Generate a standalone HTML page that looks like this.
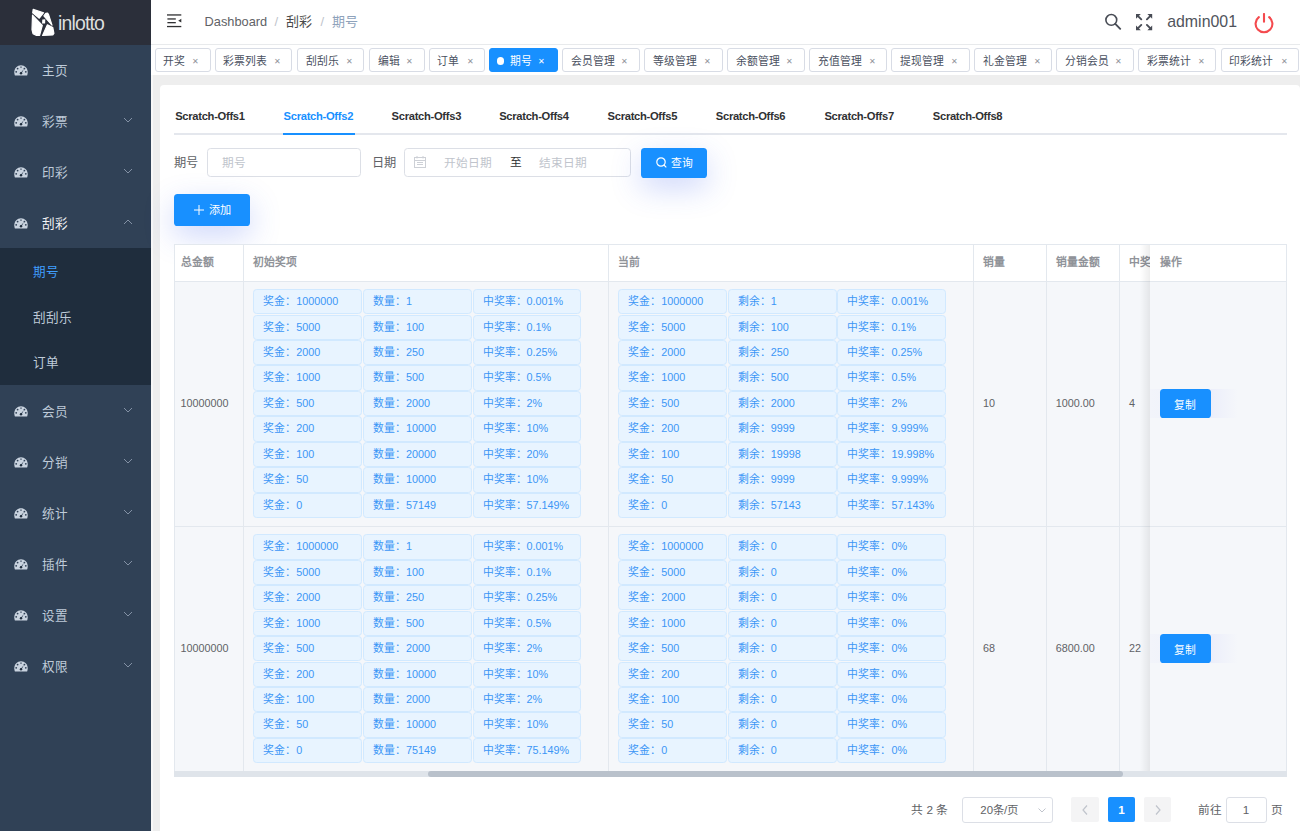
<!DOCTYPE html><html lang="zh-CN"><head><meta charset="utf-8"><style>
*{box-sizing:border-box;margin:0;padding:0}
svg{display:block}
html,body{width:1300px;height:831px;overflow:hidden;background:#eeeeee;font-family:"Liberation Sans",sans-serif;}
.abs{position:absolute}
.sb{position:absolute;left:0;top:0;width:151px;height:831px;background:#304156}
.logo{position:absolute;left:0;top:0;width:151px;height:44.5px;background:#2b2f3a}
.mi{position:absolute;left:0;width:151px;color:#bfcbd9;font-size:12.6px;}
.mi .ic{position:absolute;left:14px;}
.mi .tx{position:absolute;left:42px;}
.mi .ar{position:absolute;left:123px;}
.sub{position:absolute;left:0;width:151px;background:#1f2d3d}
.hdr{position:absolute;left:151px;top:0;width:1149px;height:45px;background:#fff;}
.tags{position:absolute;left:151px;top:45px;width:1149px;height:29.7px;background:#fff}
.tg{position:absolute;top:3px;height:23.6px;border:1px solid #d8dce5;border-radius:3px;background:#fff;color:#495060;font-size:10.8px;line-height:21.6px;white-space:nowrap}
.tg .t{position:absolute;top:2px}
.tg .x{position:absolute;top:2px;font-size:8px;color:#909399}
.card{position:absolute;left:160px;top:84.6px;width:1139.5px;height:800px;background:#fff;border-radius:4px}
.tab{position:absolute;top:109.6px;font-size:11.2px;font-weight:bold;color:#303133;white-space:nowrap;letter-spacing:-0.3px}
.lbl{position:absolute;font-size:12.2px;color:#606266}
.inp{position:absolute;border:1px solid #dcdfe6;border-radius:3.6px;background:#fff}
.ph{position:absolute;font-size:11.7px;color:#c0c4cc;white-space:nowrap}
.btn{position:absolute;background:#1890ff;border-radius:3.6px;color:#fff;font-size:11.7px;white-space:nowrap}
.tbl{position:absolute;left:174px;top:244px;width:1113px;height:533px;border:1px solid #ebeef5;background:#f5f7fa;overflow:hidden}
.th{position:absolute;font-size:10.8px;font-weight:bold;color:#909399;white-space:nowrap}
.td{position:absolute;font-size:10.8px;color:#606266;white-space:nowrap}
.vl{position:absolute;width:1px;background:#ebeef5}
.hl{position:absolute;height:1px;background:#ebeef5}
.et{position:absolute;width:108.8px;height:25.3px;background:#e8f4ff;border:1px solid #d1e9ff;border-radius:3.6px;color:#3b96f6;font-size:10.8px;line-height:23px;padding-left:9px;white-space:nowrap}
</style></head><body>
<div class="sb">
<div class="logo">
<svg class="abs" style="left:30px;top:6px" width="26" height="32" viewBox="0 0 26 32"><g fill="#fff" stroke="#fff" stroke-width="1.2" stroke-linejoin="round"><path d="M3.2 3.4L13.6 6.7 9.3 12.2 2.7 6.9z"/><path d="M2.5 9.2L12.3 19.4 9.6 29.3 6.5 29.5 3 27.6 2 23.5z"/><path d="M13.9 9.9L15.8 7.3 17.6 7.2 18.6 8.6 22 19.2z"/><path d="M17.4 18.8L22.8 21.6 23.9 27.4 22.8 29 12.6 29.4z"/></g><path d="M12.3 13.4L15.3 13.3 15.1 17.4 12.0 17.5z" fill="#fff"/></svg>
<div class="abs" style="left:57.8px;top:11px;font-size:20.5px;color:#dedede;letter-spacing:-0.9px;transform:scaleX(.95);transform-origin:left">inlotto</div>
</div>
<div class="mi" style="top:44.00px;height:51.05px">
<div class="ic" style="top:20.92px"><svg width="14" height="11" viewBox="0 0 14 11"><path d="M7 0.3C3.2 0.3 0.3 3.3 0.3 7.2c0 1.2 0.2 2.3 0.6 3.3h12.2c0.4-1 0.6-2.1 0.6-3.3C13.7 3.3 10.8 0.3 7 0.3z" fill="#c9d3df"/><circle cx="3.6" cy="3.6" r="0.9" fill="#304156"/><circle cx="10.4" cy="3.6" r="0.9" fill="#304156"/><circle cx="2.2" cy="6.8" r="0.9" fill="#304156"/><circle cx="11.8" cy="6.8" r="0.9" fill="#304156"/><rect x="6.5" y="1.4" width="1" height="1.6" fill="#304156"/><path d="M6.4 8.3L9.9 3.9 7.6 8.6z" fill="#304156"/><circle cx="7" cy="8.2" r="1.2" fill="#1f2d3d"/></svg></div>
<div class="tx" style="top:18.92px;line-height:16px;">主页</div>
</div>
<div class="mi" style="top:95.05px;height:51.05px">
<div class="ic" style="top:20.92px"><svg width="14" height="11" viewBox="0 0 14 11"><path d="M7 0.3C3.2 0.3 0.3 3.3 0.3 7.2c0 1.2 0.2 2.3 0.6 3.3h12.2c0.4-1 0.6-2.1 0.6-3.3C13.7 3.3 10.8 0.3 7 0.3z" fill="#c9d3df"/><circle cx="3.6" cy="3.6" r="0.9" fill="#304156"/><circle cx="10.4" cy="3.6" r="0.9" fill="#304156"/><circle cx="2.2" cy="6.8" r="0.9" fill="#304156"/><circle cx="11.8" cy="6.8" r="0.9" fill="#304156"/><rect x="6.5" y="1.4" width="1" height="1.6" fill="#304156"/><path d="M6.4 8.3L9.9 3.9 7.6 8.6z" fill="#304156"/><circle cx="7" cy="8.2" r="1.2" fill="#1f2d3d"/></svg></div>
<div class="tx" style="top:18.92px;line-height:16px;">彩票</div>
<div class="ar" style="top:22.02px"><svg width="10" height="6" viewBox="0 0 10 6"><path d="M1 1L5 5 9 1" fill="none" stroke="#8391a5" stroke-width="1"/></svg></div>
</div>
<div class="mi" style="top:146.10px;height:51.05px">
<div class="ic" style="top:20.92px"><svg width="14" height="11" viewBox="0 0 14 11"><path d="M7 0.3C3.2 0.3 0.3 3.3 0.3 7.2c0 1.2 0.2 2.3 0.6 3.3h12.2c0.4-1 0.6-2.1 0.6-3.3C13.7 3.3 10.8 0.3 7 0.3z" fill="#c9d3df"/><circle cx="3.6" cy="3.6" r="0.9" fill="#304156"/><circle cx="10.4" cy="3.6" r="0.9" fill="#304156"/><circle cx="2.2" cy="6.8" r="0.9" fill="#304156"/><circle cx="11.8" cy="6.8" r="0.9" fill="#304156"/><rect x="6.5" y="1.4" width="1" height="1.6" fill="#304156"/><path d="M6.4 8.3L9.9 3.9 7.6 8.6z" fill="#304156"/><circle cx="7" cy="8.2" r="1.2" fill="#1f2d3d"/></svg></div>
<div class="tx" style="top:18.92px;line-height:16px;">印彩</div>
<div class="ar" style="top:22.02px"><svg width="10" height="6" viewBox="0 0 10 6"><path d="M1 1L5 5 9 1" fill="none" stroke="#8391a5" stroke-width="1"/></svg></div>
</div>
<div class="mi" style="top:197.15px;height:51.05px">
<div class="ic" style="top:20.92px"><svg width="14" height="11" viewBox="0 0 14 11"><path d="M7 0.3C3.2 0.3 0.3 3.3 0.3 7.2c0 1.2 0.2 2.3 0.6 3.3h12.2c0.4-1 0.6-2.1 0.6-3.3C13.7 3.3 10.8 0.3 7 0.3z" fill="#c9d3df"/><circle cx="3.6" cy="3.6" r="0.9" fill="#304156"/><circle cx="10.4" cy="3.6" r="0.9" fill="#304156"/><circle cx="2.2" cy="6.8" r="0.9" fill="#304156"/><circle cx="11.8" cy="6.8" r="0.9" fill="#304156"/><rect x="6.5" y="1.4" width="1" height="1.6" fill="#304156"/><path d="M6.4 8.3L9.9 3.9 7.6 8.6z" fill="#304156"/><circle cx="7" cy="8.2" r="1.2" fill="#1f2d3d"/></svg></div>
<div class="tx" style="top:18.92px;line-height:16px;color:#f4f4f5">刮彩</div>
<div class="ar" style="top:22.02px"><svg width="10" height="6" viewBox="0 0 10 6"><path d="M1 5L5 1 9 5" fill="none" stroke="#8391a5" stroke-width="1"/></svg></div>
</div>
<div class="sub" style="top:248.20px;height:136.65px">
<div class="abs" style="left:32.5px;top:16.17px;line-height:16px;font-size:12.6px;color:#409eff">期号</div>
<div class="abs" style="left:32.5px;top:61.72px;line-height:16px;font-size:12.6px;color:#bfcbd9">刮刮乐</div>
<div class="abs" style="left:32.5px;top:107.28px;line-height:16px;font-size:12.6px;color:#bfcbd9">订单</div>
</div>
<div class="mi" style="top:384.85px;height:51.05px">
<div class="ic" style="top:20.92px"><svg width="14" height="11" viewBox="0 0 14 11"><path d="M7 0.3C3.2 0.3 0.3 3.3 0.3 7.2c0 1.2 0.2 2.3 0.6 3.3h12.2c0.4-1 0.6-2.1 0.6-3.3C13.7 3.3 10.8 0.3 7 0.3z" fill="#c9d3df"/><circle cx="3.6" cy="3.6" r="0.9" fill="#304156"/><circle cx="10.4" cy="3.6" r="0.9" fill="#304156"/><circle cx="2.2" cy="6.8" r="0.9" fill="#304156"/><circle cx="11.8" cy="6.8" r="0.9" fill="#304156"/><rect x="6.5" y="1.4" width="1" height="1.6" fill="#304156"/><path d="M6.4 8.3L9.9 3.9 7.6 8.6z" fill="#304156"/><circle cx="7" cy="8.2" r="1.2" fill="#1f2d3d"/></svg></div>
<div class="tx" style="top:18.92px;line-height:16px">会员</div>
<div class="ar" style="top:22.02px"><svg width="10" height="6" viewBox="0 0 10 6"><path d="M1 1L5 5 9 1" fill="none" stroke="#8391a5" stroke-width="1"/></svg></div>
</div>
<div class="mi" style="top:435.90px;height:51.05px">
<div class="ic" style="top:20.92px"><svg width="14" height="11" viewBox="0 0 14 11"><path d="M7 0.3C3.2 0.3 0.3 3.3 0.3 7.2c0 1.2 0.2 2.3 0.6 3.3h12.2c0.4-1 0.6-2.1 0.6-3.3C13.7 3.3 10.8 0.3 7 0.3z" fill="#c9d3df"/><circle cx="3.6" cy="3.6" r="0.9" fill="#304156"/><circle cx="10.4" cy="3.6" r="0.9" fill="#304156"/><circle cx="2.2" cy="6.8" r="0.9" fill="#304156"/><circle cx="11.8" cy="6.8" r="0.9" fill="#304156"/><rect x="6.5" y="1.4" width="1" height="1.6" fill="#304156"/><path d="M6.4 8.3L9.9 3.9 7.6 8.6z" fill="#304156"/><circle cx="7" cy="8.2" r="1.2" fill="#1f2d3d"/></svg></div>
<div class="tx" style="top:18.92px;line-height:16px">分销</div>
<div class="ar" style="top:22.02px"><svg width="10" height="6" viewBox="0 0 10 6"><path d="M1 1L5 5 9 1" fill="none" stroke="#8391a5" stroke-width="1"/></svg></div>
</div>
<div class="mi" style="top:486.95px;height:51.05px">
<div class="ic" style="top:20.92px"><svg width="14" height="11" viewBox="0 0 14 11"><path d="M7 0.3C3.2 0.3 0.3 3.3 0.3 7.2c0 1.2 0.2 2.3 0.6 3.3h12.2c0.4-1 0.6-2.1 0.6-3.3C13.7 3.3 10.8 0.3 7 0.3z" fill="#c9d3df"/><circle cx="3.6" cy="3.6" r="0.9" fill="#304156"/><circle cx="10.4" cy="3.6" r="0.9" fill="#304156"/><circle cx="2.2" cy="6.8" r="0.9" fill="#304156"/><circle cx="11.8" cy="6.8" r="0.9" fill="#304156"/><rect x="6.5" y="1.4" width="1" height="1.6" fill="#304156"/><path d="M6.4 8.3L9.9 3.9 7.6 8.6z" fill="#304156"/><circle cx="7" cy="8.2" r="1.2" fill="#1f2d3d"/></svg></div>
<div class="tx" style="top:18.92px;line-height:16px">统计</div>
<div class="ar" style="top:22.02px"><svg width="10" height="6" viewBox="0 0 10 6"><path d="M1 1L5 5 9 1" fill="none" stroke="#8391a5" stroke-width="1"/></svg></div>
</div>
<div class="mi" style="top:538.00px;height:51.05px">
<div class="ic" style="top:20.92px"><svg width="14" height="11" viewBox="0 0 14 11"><path d="M7 0.3C3.2 0.3 0.3 3.3 0.3 7.2c0 1.2 0.2 2.3 0.6 3.3h12.2c0.4-1 0.6-2.1 0.6-3.3C13.7 3.3 10.8 0.3 7 0.3z" fill="#c9d3df"/><circle cx="3.6" cy="3.6" r="0.9" fill="#304156"/><circle cx="10.4" cy="3.6" r="0.9" fill="#304156"/><circle cx="2.2" cy="6.8" r="0.9" fill="#304156"/><circle cx="11.8" cy="6.8" r="0.9" fill="#304156"/><rect x="6.5" y="1.4" width="1" height="1.6" fill="#304156"/><path d="M6.4 8.3L9.9 3.9 7.6 8.6z" fill="#304156"/><circle cx="7" cy="8.2" r="1.2" fill="#1f2d3d"/></svg></div>
<div class="tx" style="top:18.92px;line-height:16px">插件</div>
<div class="ar" style="top:22.02px"><svg width="10" height="6" viewBox="0 0 10 6"><path d="M1 1L5 5 9 1" fill="none" stroke="#8391a5" stroke-width="1"/></svg></div>
</div>
<div class="mi" style="top:589.05px;height:51.05px">
<div class="ic" style="top:20.92px"><svg width="14" height="11" viewBox="0 0 14 11"><path d="M7 0.3C3.2 0.3 0.3 3.3 0.3 7.2c0 1.2 0.2 2.3 0.6 3.3h12.2c0.4-1 0.6-2.1 0.6-3.3C13.7 3.3 10.8 0.3 7 0.3z" fill="#c9d3df"/><circle cx="3.6" cy="3.6" r="0.9" fill="#304156"/><circle cx="10.4" cy="3.6" r="0.9" fill="#304156"/><circle cx="2.2" cy="6.8" r="0.9" fill="#304156"/><circle cx="11.8" cy="6.8" r="0.9" fill="#304156"/><rect x="6.5" y="1.4" width="1" height="1.6" fill="#304156"/><path d="M6.4 8.3L9.9 3.9 7.6 8.6z" fill="#304156"/><circle cx="7" cy="8.2" r="1.2" fill="#1f2d3d"/></svg></div>
<div class="tx" style="top:18.92px;line-height:16px">设置</div>
<div class="ar" style="top:22.02px"><svg width="10" height="6" viewBox="0 0 10 6"><path d="M1 1L5 5 9 1" fill="none" stroke="#8391a5" stroke-width="1"/></svg></div>
</div>
<div class="mi" style="top:640.10px;height:51.05px">
<div class="ic" style="top:20.92px"><svg width="14" height="11" viewBox="0 0 14 11"><path d="M7 0.3C3.2 0.3 0.3 3.3 0.3 7.2c0 1.2 0.2 2.3 0.6 3.3h12.2c0.4-1 0.6-2.1 0.6-3.3C13.7 3.3 10.8 0.3 7 0.3z" fill="#c9d3df"/><circle cx="3.6" cy="3.6" r="0.9" fill="#304156"/><circle cx="10.4" cy="3.6" r="0.9" fill="#304156"/><circle cx="2.2" cy="6.8" r="0.9" fill="#304156"/><circle cx="11.8" cy="6.8" r="0.9" fill="#304156"/><rect x="6.5" y="1.4" width="1" height="1.6" fill="#304156"/><path d="M6.4 8.3L9.9 3.9 7.6 8.6z" fill="#304156"/><circle cx="7" cy="8.2" r="1.2" fill="#1f2d3d"/></svg></div>
<div class="tx" style="top:18.92px;line-height:16px">权限</div>
<div class="ar" style="top:22.02px"><svg width="10" height="6" viewBox="0 0 10 6"><path d="M1 1L5 5 9 1" fill="none" stroke="#8391a5" stroke-width="1"/></svg></div>
</div>
</div>
<div class="abs" style="left:151px;top:45px;width:2px;height:786px;background:#f7f7f7"></div>
<div class="hdr">
<svg class="abs" style="left:16px;top:14px" width="15" height="14" viewBox="0 0 15 14"><g fill="#303133"><rect x="0" y="0.3" width="14.3" height="1.3"/><rect x="0.4" y="4.3" width="8.4" height="1.3"/><rect x="0.4" y="8" width="8.4" height="1.3"/><rect x="0" y="11.9" width="14.3" height="1.3"/><path d="M14.3 4.8V8.6L11.2 6.7z"/></g></svg>
<div class="abs" style="left:53.6px;top:14px;font-size:12.8px;line-height:16px;color:#606266;white-space:nowrap">Dashboard</div>
<div class="abs" style="left:123.5px;top:14px;font-size:13px;line-height:16px;color:#c0c4cc">/</div>
<div class="abs" style="left:135px;top:14px;font-size:13px;line-height:16px;color:#4a4a4a">刮彩</div>
<div class="abs" style="left:169.5px;top:14px;font-size:13px;line-height:16px;color:#c0c4cc">/</div>
<div class="abs" style="left:181px;top:14px;font-size:13px;line-height:16px;color:#8ea2bb">期号</div>
<svg class="abs" style="left:953px;top:12px" width="18" height="18" viewBox="0 0 18 18"><circle cx="7.3" cy="7.9" r="5.4" fill="none" stroke="#484c55" stroke-width="1.6"/><path d="M11.3 11.9L16.2 16.8" stroke="#484c55" stroke-width="1.9" stroke-linecap="round"/></svg>
<svg class="abs" style="left:985px;top:13.6px" width="17" height="17" viewBox="0 0 17 17"><g fill="#484c55"><path d="M0 0H4.8L0 4.8z"/><path d="M16.2 0H11.4L16.2 4.8z"/><path d="M0 16.2H4.8L0 11.4z"/><path d="M16.2 16.2H11.4L16.2 11.4z"/></g><g stroke="#484c55" stroke-width="1.9" stroke-linecap="round"><path d="M1.8 1.8L5.3 5.3"/><path d="M14.4 1.8L10.9 5.3"/><path d="M1.8 14.4L5.3 10.9"/><path d="M14.4 14.4L10.9 10.9"/></g></svg>
<div class="abs" style="left:1016.2px;top:12.2px;font-size:15.9px;line-height:20px;color:#50545c;white-space:nowrap">admin001</div>
<svg class="abs" style="left:1103px;top:12.5px" width="20" height="21" viewBox="0 0 20 21"><path d="M4.83 4.18A8.4 8.4 0 1 0 15.17 4.18" fill="none" stroke="#f44a4e" stroke-width="2.1" stroke-linecap="round"/><path d="M10 1V8.8" stroke="#f44a4e" stroke-width="2.1" stroke-linecap="round"/></svg>
</div>
<div class="abs" style="left:151px;top:44px;width:1149px;height:1px;background:#e8eaec"></div>
<div class="tags">
<div class="tg" style="left:3.50px;width:56.00px"><span class="t" style="left:7.8px">开奖</span><span class="x" style="left:36.50px">✕</span></div>
<div class="tg" style="left:63.70px;width:77.80px"><span class="t" style="left:7.8px">彩票列表</span><span class="x" style="left:58.30px">✕</span></div>
<div class="tg" style="left:145.90px;width:67.60px"><span class="t" style="left:7.8px">刮刮乐</span><span class="x" style="left:48.10px">✕</span></div>
<div class="tg" style="left:217.90px;width:56.10px"><span class="t" style="left:7.8px">编辑</span><span class="x" style="left:36.60px">✕</span></div>
<div class="tg" style="left:277.70px;width:56.40px"><span class="t" style="left:7.8px">订单</span><span class="x" style="left:36.90px">✕</span></div>
<div class="tg" style="left:337.80px;width:69.40px;background:#1890ff;border-color:#1890ff;color:#fff"><span class="abs" style="left:7px;top:8.4px;width:7.5px;height:7.5px;border-radius:50%;background:#fff"></span><span class="t" style="left:20px">期号</span><span class="x" style="left:48.5px;color:#fff">✕</span></div>
<div class="tg" style="left:411.20px;width:77.60px"><span class="t" style="left:7.8px">会员管理</span><span class="x" style="left:58.10px">✕</span></div>
<div class="tg" style="left:493.00px;width:78.80px"><span class="t" style="left:7.8px">等级管理</span><span class="x" style="left:59.30px">✕</span></div>
<div class="tg" style="left:575.90px;width:77.90px"><span class="t" style="left:7.8px">余额管理</span><span class="x" style="left:58.40px">✕</span></div>
<div class="tg" style="left:658.00px;width:78.00px"><span class="t" style="left:7.8px">充值管理</span><span class="x" style="left:58.50px">✕</span></div>
<div class="tg" style="left:740.20px;width:78.80px"><span class="t" style="left:7.8px">提现管理</span><span class="x" style="left:59.30px">✕</span></div>
<div class="tg" style="left:823.20px;width:78.00px"><span class="t" style="left:7.8px">礼金管理</span><span class="x" style="left:58.50px">✕</span></div>
<div class="tg" style="left:905.00px;width:77.90px"><span class="t" style="left:7.8px">分销会员</span><span class="x" style="left:58.40px">✕</span></div>
<div class="tg" style="left:987.20px;width:78.30px"><span class="t" style="left:7.8px">彩票统计</span><span class="x" style="left:58.80px">✕</span></div>
<div class="tg" style="left:1069.70px;width:78.40px"><span class="t" style="left:7.8px">印彩统计</span><span class="x" style="left:58.90px">✕</span></div>
</div>
<div class="card"></div>
<div class="tab" style="left:175.20px;color:#303133">Scratch-Offs1</div>
<div class="tab" style="left:283.60px;color:#1890ff">Scratch-Offs2</div>
<div class="tab" style="left:391.60px;color:#303133">Scratch-Offs3</div>
<div class="tab" style="left:499.20px;color:#303133">Scratch-Offs4</div>
<div class="tab" style="left:607.60px;color:#303133">Scratch-Offs5</div>
<div class="tab" style="left:715.80px;color:#303133">Scratch-Offs6</div>
<div class="tab" style="left:824.40px;color:#303133">Scratch-Offs7</div>
<div class="tab" style="left:932.80px;color:#303133">Scratch-Offs8</div>
<div class="abs" style="left:174px;top:133px;width:1113px;height:2px;background:#e4e7ed"></div>
<div class="abs" style="left:282.5px;top:133px;width:72px;height:2px;background:#1890ff"></div>
<div class="lbl" style="left:174px;top:155.3px;line-height:16px">期号</div>
<div class="inp" style="left:207.3px;top:147.6px;width:154px;height:29px"></div>
<div class="ph" style="left:221.5px;top:155px;line-height:15px">期号</div>
<div class="lbl" style="left:371.5px;top:155.3px;line-height:16px">日期</div>
<div class="inp" style="left:403.8px;top:147.6px;width:227.6px;height:29px"></div>
<svg class="abs" style="left:414px;top:156px" width="12" height="12" viewBox="0 0 12 12"><g fill="none" stroke="#cdd0d6" stroke-width="1"><rect x="0.5" y="1.5" width="11" height="10"/><path d="M0.5 4.5H11.5M3 6.5H9M3 8.5H9M3 0V2.5M9 0V2.5"/></g></svg>
<div class="ph" style="left:444px;top:155px;line-height:15px">开始日期</div>
<div class="ph" style="left:510px;top:153.5px;line-height:15px;color:#303133">至</div>
<div class="ph" style="left:539px;top:155px;line-height:15px">结束日期</div>
<div class="btn" style="left:641px;top:147.7px;width:66px;height:30px;box-shadow:0 10px 30px rgba(60,95,240,.25)"></div>
<svg class="abs" style="left:656px;top:157px" width="11" height="11" viewBox="0 0 11 11"><circle cx="5" cy="5" r="4.2" fill="none" stroke="#fff" stroke-width="1.2"/><path d="M8 8L10.3 10.3" stroke="#fff" stroke-width="1.2"/></svg>
<div class="btn" style="left:671px;top:155.5px;line-height:15px;background:none;font-size:10.8px">查询</div>
<div class="btn" style="left:174px;top:194px;width:76px;height:32px;box-shadow:0 10px 30px rgba(60,95,240,.25)"></div>
<svg class="abs" style="left:194px;top:205px" width="10" height="10" viewBox="0 0 10 10"><path d="M5 0V10M0 5H10" stroke="#fff" stroke-width="1"/></svg>
<div class="btn" style="left:208.6px;top:202.5px;line-height:15px;background:none;font-size:11.2px">添加</div>
<div class="abs" style="left:174px;top:244px;width:1113px;height:533px;background:#f5f7fa"></div>
<div class="abs" style="left:174px;top:244px;width:1113px;height:37px;background:#fff"></div>
<div class="abs" style="left:174px;top:244px;width:1113px;height:1px;background:#e3e8ee"></div>
<div class="abs" style="left:174px;top:281px;width:1113px;height:1px;background:#e3e8ee"></div>
<div class="abs" style="left:174px;top:526px;width:1113px;height:1px;background:#e3e8ee"></div>
<div class="abs" style="left:174px;top:244px;width:1px;height:527px;background:#e3e8ee"></div>
<div class="abs" style="left:1286px;top:244px;width:1px;height:527px;background:#e3e8ee"></div>
<div class="abs" style="left:243px;top:244px;width:1px;height:527px;background:#e3e8ee"></div>
<div class="abs" style="left:608px;top:244px;width:1px;height:527px;background:#e3e8ee"></div>
<div class="abs" style="left:973px;top:244px;width:1px;height:527px;background:#e3e8ee"></div>
<div class="abs" style="left:1046px;top:244px;width:1px;height:527px;background:#e3e8ee"></div>
<div class="abs" style="left:1119px;top:244px;width:1px;height:527px;background:#e3e8ee"></div>
<div class="th" style="left:180.50px;top:255px;line-height:14px">总金额</div>
<div class="th" style="left:252.50px;top:255px;line-height:14px">初始奖项</div>
<div class="th" style="left:617.50px;top:255px;line-height:14px">当前</div>
<div class="th" style="left:983.00px;top:255px;line-height:14px">销量</div>
<div class="th" style="left:1055.80px;top:255px;line-height:14px">销量金额</div>
<div class="th" style="left:1129.00px;top:255px;line-height:14px">中奖</div>
<div class="et" style="left:253.30px;top:289.10px">奖金：1000000</div>
<div class="et" style="left:362.90px;top:289.10px">数量：1</div>
<div class="et" style="left:472.50px;top:289.10px">中奖率：0.001%</div>
<div class="et" style="left:253.30px;top:314.55px">奖金：5000</div>
<div class="et" style="left:362.90px;top:314.55px">数量：100</div>
<div class="et" style="left:472.50px;top:314.55px">中奖率：0.1%</div>
<div class="et" style="left:253.30px;top:340.00px">奖金：2000</div>
<div class="et" style="left:362.90px;top:340.00px">数量：250</div>
<div class="et" style="left:472.50px;top:340.00px">中奖率：0.25%</div>
<div class="et" style="left:253.30px;top:365.45px">奖金：1000</div>
<div class="et" style="left:362.90px;top:365.45px">数量：500</div>
<div class="et" style="left:472.50px;top:365.45px">中奖率：0.5%</div>
<div class="et" style="left:253.30px;top:390.90px">奖金：500</div>
<div class="et" style="left:362.90px;top:390.90px">数量：2000</div>
<div class="et" style="left:472.50px;top:390.90px">中奖率：2%</div>
<div class="et" style="left:253.30px;top:416.35px">奖金：200</div>
<div class="et" style="left:362.90px;top:416.35px">数量：10000</div>
<div class="et" style="left:472.50px;top:416.35px">中奖率：10%</div>
<div class="et" style="left:253.30px;top:441.80px">奖金：100</div>
<div class="et" style="left:362.90px;top:441.80px">数量：20000</div>
<div class="et" style="left:472.50px;top:441.80px">中奖率：20%</div>
<div class="et" style="left:253.30px;top:467.25px">奖金：50</div>
<div class="et" style="left:362.90px;top:467.25px">数量：10000</div>
<div class="et" style="left:472.50px;top:467.25px">中奖率：10%</div>
<div class="et" style="left:253.30px;top:492.70px">奖金：0</div>
<div class="et" style="left:362.90px;top:492.70px">数量：57149</div>
<div class="et" style="left:472.50px;top:492.70px">中奖率：57.149%</div>
<div class="et" style="left:618.20px;top:289.10px">奖金：1000000</div>
<div class="et" style="left:727.80px;top:289.10px">剩余：1</div>
<div class="et" style="left:837.40px;top:289.10px">中奖率：0.001%</div>
<div class="et" style="left:618.20px;top:314.55px">奖金：5000</div>
<div class="et" style="left:727.80px;top:314.55px">剩余：100</div>
<div class="et" style="left:837.40px;top:314.55px">中奖率：0.1%</div>
<div class="et" style="left:618.20px;top:340.00px">奖金：2000</div>
<div class="et" style="left:727.80px;top:340.00px">剩余：250</div>
<div class="et" style="left:837.40px;top:340.00px">中奖率：0.25%</div>
<div class="et" style="left:618.20px;top:365.45px">奖金：1000</div>
<div class="et" style="left:727.80px;top:365.45px">剩余：500</div>
<div class="et" style="left:837.40px;top:365.45px">中奖率：0.5%</div>
<div class="et" style="left:618.20px;top:390.90px">奖金：500</div>
<div class="et" style="left:727.80px;top:390.90px">剩余：2000</div>
<div class="et" style="left:837.40px;top:390.90px">中奖率：2%</div>
<div class="et" style="left:618.20px;top:416.35px">奖金：200</div>
<div class="et" style="left:727.80px;top:416.35px">剩余：9999</div>
<div class="et" style="left:837.40px;top:416.35px">中奖率：9.999%</div>
<div class="et" style="left:618.20px;top:441.80px">奖金：100</div>
<div class="et" style="left:727.80px;top:441.80px">剩余：19998</div>
<div class="et" style="left:837.40px;top:441.80px">中奖率：19.998%</div>
<div class="et" style="left:618.20px;top:467.25px">奖金：50</div>
<div class="et" style="left:727.80px;top:467.25px">剩余：9999</div>
<div class="et" style="left:837.40px;top:467.25px">中奖率：9.999%</div>
<div class="et" style="left:618.20px;top:492.70px">奖金：0</div>
<div class="et" style="left:727.80px;top:492.70px">剩余：57143</div>
<div class="et" style="left:837.40px;top:492.70px">中奖率：57.143%</div>
<div class="td" style="left:180.50px;top:394.80px;line-height:16px">10000000</div>
<div class="td" style="left:983.00px;top:394.80px;line-height:16px">10</div>
<div class="td" style="left:1055.80px;top:394.80px;line-height:16px">1000.00</div>
<div class="td" style="left:1129.00px;top:394.80px;line-height:16px">4</div>
<div class="et" style="left:253.30px;top:534.30px">奖金：1000000</div>
<div class="et" style="left:362.90px;top:534.30px">数量：1</div>
<div class="et" style="left:472.50px;top:534.30px">中奖率：0.001%</div>
<div class="et" style="left:253.30px;top:559.75px">奖金：5000</div>
<div class="et" style="left:362.90px;top:559.75px">数量：100</div>
<div class="et" style="left:472.50px;top:559.75px">中奖率：0.1%</div>
<div class="et" style="left:253.30px;top:585.20px">奖金：2000</div>
<div class="et" style="left:362.90px;top:585.20px">数量：250</div>
<div class="et" style="left:472.50px;top:585.20px">中奖率：0.25%</div>
<div class="et" style="left:253.30px;top:610.65px">奖金：1000</div>
<div class="et" style="left:362.90px;top:610.65px">数量：500</div>
<div class="et" style="left:472.50px;top:610.65px">中奖率：0.5%</div>
<div class="et" style="left:253.30px;top:636.10px">奖金：500</div>
<div class="et" style="left:362.90px;top:636.10px">数量：2000</div>
<div class="et" style="left:472.50px;top:636.10px">中奖率：2%</div>
<div class="et" style="left:253.30px;top:661.55px">奖金：200</div>
<div class="et" style="left:362.90px;top:661.55px">数量：10000</div>
<div class="et" style="left:472.50px;top:661.55px">中奖率：10%</div>
<div class="et" style="left:253.30px;top:687.00px">奖金：100</div>
<div class="et" style="left:362.90px;top:687.00px">数量：2000</div>
<div class="et" style="left:472.50px;top:687.00px">中奖率：2%</div>
<div class="et" style="left:253.30px;top:712.45px">奖金：50</div>
<div class="et" style="left:362.90px;top:712.45px">数量：10000</div>
<div class="et" style="left:472.50px;top:712.45px">中奖率：10%</div>
<div class="et" style="left:253.30px;top:737.90px">奖金：0</div>
<div class="et" style="left:362.90px;top:737.90px">数量：75149</div>
<div class="et" style="left:472.50px;top:737.90px">中奖率：75.149%</div>
<div class="et" style="left:618.20px;top:534.30px">奖金：1000000</div>
<div class="et" style="left:727.80px;top:534.30px">剩余：0</div>
<div class="et" style="left:837.40px;top:534.30px">中奖率：0%</div>
<div class="et" style="left:618.20px;top:559.75px">奖金：5000</div>
<div class="et" style="left:727.80px;top:559.75px">剩余：0</div>
<div class="et" style="left:837.40px;top:559.75px">中奖率：0%</div>
<div class="et" style="left:618.20px;top:585.20px">奖金：2000</div>
<div class="et" style="left:727.80px;top:585.20px">剩余：0</div>
<div class="et" style="left:837.40px;top:585.20px">中奖率：0%</div>
<div class="et" style="left:618.20px;top:610.65px">奖金：1000</div>
<div class="et" style="left:727.80px;top:610.65px">剩余：0</div>
<div class="et" style="left:837.40px;top:610.65px">中奖率：0%</div>
<div class="et" style="left:618.20px;top:636.10px">奖金：500</div>
<div class="et" style="left:727.80px;top:636.10px">剩余：0</div>
<div class="et" style="left:837.40px;top:636.10px">中奖率：0%</div>
<div class="et" style="left:618.20px;top:661.55px">奖金：200</div>
<div class="et" style="left:727.80px;top:661.55px">剩余：0</div>
<div class="et" style="left:837.40px;top:661.55px">中奖率：0%</div>
<div class="et" style="left:618.20px;top:687.00px">奖金：100</div>
<div class="et" style="left:727.80px;top:687.00px">剩余：0</div>
<div class="et" style="left:837.40px;top:687.00px">中奖率：0%</div>
<div class="et" style="left:618.20px;top:712.45px">奖金：50</div>
<div class="et" style="left:727.80px;top:712.45px">剩余：0</div>
<div class="et" style="left:837.40px;top:712.45px">中奖率：0%</div>
<div class="et" style="left:618.20px;top:737.90px">奖金：0</div>
<div class="et" style="left:727.80px;top:737.90px">剩余：0</div>
<div class="et" style="left:837.40px;top:737.90px">中奖率：0%</div>
<div class="td" style="left:180.50px;top:640.00px;line-height:16px">10000000</div>
<div class="td" style="left:983.00px;top:640.00px;line-height:16px">68</div>
<div class="td" style="left:1055.80px;top:640.00px;line-height:16px">6800.00</div>
<div class="td" style="left:1129.00px;top:640.00px;line-height:16px">22</div>
<div class="abs" style="left:1140px;top:245px;width:10px;height:526px;background:linear-gradient(to right,rgba(0,0,0,0),rgba(0,0,0,.07))"></div>
<div class="abs" style="left:1150px;top:245px;width:136px;height:526px;background:#f5f7fa"></div>
<div class="abs" style="left:1150px;top:245px;width:136px;height:36px;background:#fff"></div>
<div class="abs" style="left:1150px;top:281px;width:136px;height:1px;background:#e3e8ee"></div>
<div class="abs" style="left:1150px;top:526px;width:136px;height:1px;background:#e3e8ee"></div>
<div class="th" style="left:1159.9px;top:255px;line-height:14px">操作</div>
<div class="abs" style="left:1150px;top:389.20px;width:88px;height:28.8px;background:linear-gradient(to right,rgba(90,100,255,.02),rgba(90,100,255,.06) 70%,rgba(90,100,255,0))"></div>
<div class="btn" style="left:1159.6px;top:389.20px;width:51px;height:28.8px"></div>
<div class="btn" style="left:1174px;top:397.60px;line-height:15px;background:none;font-size:10.8px">复制</div>
<div class="abs" style="left:1150px;top:634.40px;width:88px;height:28.8px;background:linear-gradient(to right,rgba(90,100,255,.02),rgba(90,100,255,.06) 70%,rgba(90,100,255,0))"></div>
<div class="btn" style="left:1159.6px;top:634.40px;width:51px;height:28.8px"></div>
<div class="btn" style="left:1174px;top:642.80px;line-height:15px;background:none;font-size:10.8px">复制</div>
<div class="abs" style="left:174px;top:771px;width:1113px;height:6px;background:#dfe4ea"></div>
<div class="abs" style="left:427.8px;top:771px;width:695.2px;height:6px;background:#b9c1cb;border-radius:3px"></div>
<div class="abs" style="left:911.3px;top:802.4px;font-size:11.8px;line-height:16px;color:#606266;white-space:nowrap">共 2 条</div>
<div class="inp" style="left:962.3px;top:797.4px;width:90.3px;height:25.2px;border-radius:3px"></div>
<div class="abs" style="left:980.3px;top:802px;font-size:11.4px;line-height:16px;color:#606266;white-space:nowrap">20条/页</div>
<svg class="abs" style="left:1037.8px;top:808px" width="8" height="5" viewBox="0 0 8 5"><path d="M0.5 0.5L4 4 7.5 0.5" fill="none" stroke="#c0c4cc" stroke-width="1"/></svg>
<div class="abs" style="left:1071px;top:797px;width:27.6px;height:25.4px;background:#f4f4f5;border-radius:2px"></div>
<svg class="abs" style="left:1082px;top:805px" width="6" height="10" viewBox="0 0 6 10"><path d="M5 0.5L1 5 5 9.5" fill="none" stroke="#c0c4cc" stroke-width="1.2"/></svg>
<div class="abs" style="left:1108px;top:797px;width:26.8px;height:25.4px;background:#1890ff;border-radius:2px;color:#fff;font-size:11.7px;font-weight:bold;text-align:center;line-height:25.4px">1</div>
<div class="abs" style="left:1144px;top:797px;width:27.4px;height:25.4px;background:#f4f4f5;border-radius:2px"></div>
<svg class="abs" style="left:1155px;top:805px" width="6" height="10" viewBox="0 0 6 10"><path d="M1 0.5L5 5 1 9.5" fill="none" stroke="#c0c4cc" stroke-width="1.2"/></svg>
<div class="abs" style="left:1198px;top:802px;font-size:11.7px;line-height:16px;color:#606266">前往</div>
<div class="inp" style="left:1225.6px;top:797.4px;width:41px;height:25.2px;border-radius:3px;text-align:center;font-size:11.7px;line-height:23px;color:#606266">1</div>
<div class="abs" style="left:1271px;top:802px;font-size:11.7px;line-height:16px;color:#606266">页</div>
</body></html>
